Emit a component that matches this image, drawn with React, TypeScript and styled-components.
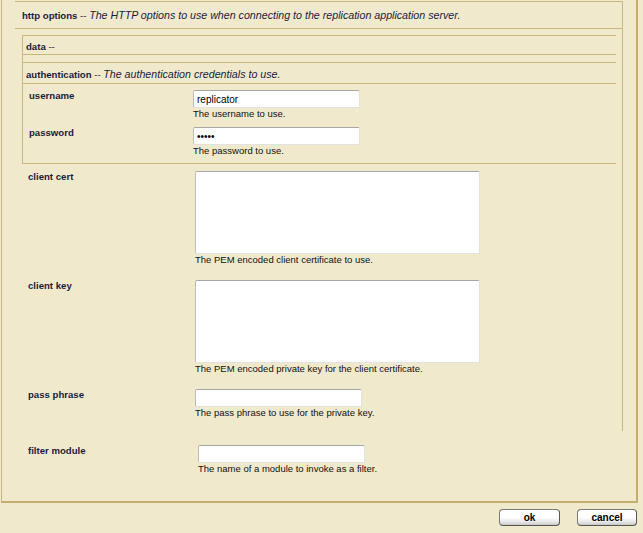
import React from 'react';
import styled, { createGlobalStyle } from 'styled-components';

const C = {
  bg: '#f1e9cc',
  line: '#c9b77c',
  frame: '#c4ae6e',
  ink: '#1b1b3e',
};

const Global = createGlobalStyle`
  html, body { margin: 0; padding: 0; background: ${C.bg}; }
  body {
    font-family: "Liberation Sans", Arial, sans-serif;
    width: 643px;
    height: 533px;
    overflow: hidden;
  }
  * { box-sizing: border-box; }
`;

const Page = styled.div`
  width: 643px;
  height: 533px;
  display: flex;
  flex-direction: column;
`;

const Frame = styled.div`
  margin-left: 1px;
  width: 637px;
  height: 503px;
  border-left: 1px solid ${C.line};
  border-right: 2px solid ${C.frame};
  border-bottom: 2px solid ${C.frame};
  padding: 1px 13px 0;
  display: flex;
  flex-direction: column;
`;

const Box = styled.div`
  border-top: 1px solid ${C.line};
  border-right: 1px solid ${C.line};
`;

const BoxHeader = styled.div`
  height: 27px;
  line-height: 24px;
  padding-left: 7px;
  border-bottom: 1px solid ${C.line};
  color: ${C.ink};
  white-space: nowrap;
`;

const Title = styled.span`
  font-weight: bold;
  font-size: 9.6px;
`;

const Dash = styled.span`
  font-size: 9.6px;
`;

const Note = styled.span`
  font-style: italic;
  font-size: 10.67px;
`;

const BoxBody = styled.div`
  padding: 6px 6px 12px 7px;
`;

const Group = styled.div`
  border-left: 1px solid ${C.line};
  border-top: 1px solid ${C.line};
`;

const SubHeader = styled.div<{ $h: number }>`
  height: ${(p) => p.$h + 1}px;
  line-height: ${(p) => p.$h}px;
  padding-left: 3px;
  border-bottom: 1px solid ${C.line};
  color: ${C.ink};
  white-space: nowrap;
`;

const SubSection = styled.div`
  margin-top: 7px;
  border-top: 1px solid ${C.line};
  border-bottom: 1px solid ${C.line};
`;

const Fields = styled.div<{ $pad: string; $gap: number }>`
  display: flex;
  flex-direction: column;
  gap: ${(p) => p.$gap}px;
  padding: ${(p) => p.$pad};
`;

const Row = styled.div<{ $label: number }>`
  display: grid;
  grid-template-columns: ${(p) => p.$label}px auto;
  align-items: start;
`;

const Label = styled.div`
  font-weight: bold;
  font-size: 9.6px;
  line-height: 12px;
  color: ${C.ink};
`;

const Control = styled.div`
  display: flex;
  flex-direction: column;
  align-items: flex-start;
`;

const fieldBorder = `
  border-top: 1px solid #a7a7a7;
  border-left: 1px solid #bdbdbd;
  border-right: 1px solid #e2e2e2;
  border-bottom: 1px solid #e2e2e2;
  border-radius: 2px;
  background: #fff;
  outline: none;
`;

const TextInput = styled.input`
  ${fieldBorder}
  display: block;
  width: 167px;
  height: 18px;
  margin: 0;
  padding: 0 3px;
  font-family: "Liberation Sans", Arial, sans-serif;
  font-size: 10px;
  color: #000;
`;

const TextArea = styled.textarea`
  ${fieldBorder}
  display: block;
  width: 285px;
  height: 83px;
  margin: 0;
  padding: 2px 3px;
  resize: none;
  font-family: "Liberation Sans", Arial, sans-serif;
  font-size: 10px;
`;

const Desc = styled.div`
  font-size: 9.5px;
  line-height: 12px;
  color: #111;
  white-space: nowrap;
`;

const Outside = styled.div`
  padding: 14px 0 0 13px;
`;

const ButtonBar = styled.div`
  display: flex;
  justify-content: flex-end;
  gap: 17px;
  padding: 6px 6px 0 0;
`;

const Button = styled.button<{ $w: number }>`
  width: ${(p) => p.$w}px;
  height: 17px;
  margin: 0;
  padding: 0;
  border: 1px solid #7a7a7a;
  border-bottom-color: #555;
  border-right-color: #555;
  border-radius: 4px;
  background: linear-gradient(#ffffff 0%, #ffffff 50%, #e6e6e6 80%, #c8c8c8 100%);
  font-family: "Liberation Sans", Arial, sans-serif;
  font-weight: bold;
  font-size: 10px;
  color: #000;
  cursor: pointer;
`;

type Field = {
  label: string;
  desc: string;
  kind: 'text' | 'password' | 'area';
  value?: string;
};

const authFields: Field[] = [
  { label: 'username', desc: 'The username to use.', kind: 'text', value: 'replicator' },
  { label: 'password', desc: 'The password to use.', kind: 'password', value: 'xxxxx' },
];

const httpFields: Field[] = [
  { label: 'client cert', desc: 'The PEM encoded client certificate to use.', kind: 'area' },
  { label: 'client key', desc: 'The PEM encoded private key for the client certificate.', kind: 'area' },
  { label: 'pass phrase', desc: 'The pass phrase to use for the private key.', kind: 'text' },
];

const filterFields: Field[] = [
  { label: 'filter module', desc: 'The name of a module to invoke as a filter.', kind: 'text' },
];

function FieldRow({ f, labelWidth }: { f: Field; labelWidth: number }) {
  return (
    <Row $label={labelWidth}>
      <Label>{f.label}</Label>
      <Control>
        {f.kind === 'area' ? (
          <TextArea defaultValue="" />
        ) : (
          <TextInput type={f.kind} defaultValue={f.value ?? ''} />
        )}
        <Desc>{f.desc}</Desc>
      </Control>
    </Row>
  );
}

export default function App() {
  return (
    <Page>
      <Global />
      <Frame>
        <Box>
          <BoxHeader>
            <Title>http options</Title>
            <Dash> -- </Dash>
            <Note>The HTTP options to use when connecting to the replication application server.</Note>
          </BoxHeader>
          <BoxBody>
            <Group>
              <SubHeader $h={18}>
                <Title>data</Title>
                <Dash> --</Dash>
              </SubHeader>
              <SubSection>
                <SubHeader $h={20}>
                  <Title>authentication</Title>
                  <Dash> -- </Dash>
                  <Note>The authentication credentials to use.</Note>
                </SubHeader>
                <Fields $pad="6px 0 6px 6px" $gap={7}>
                  {authFields.map((f) => (
                    <FieldRow key={f.label} f={f} labelWidth={164} />
                  ))}
                </Fields>
              </SubSection>
            </Group>
            <Fields $pad="7px 0 0 6px" $gap={14}>
              {httpFields.map((f) => (
                <FieldRow key={f.label} f={f} labelWidth={167} />
              ))}
            </Fields>
          </BoxBody>
        </Box>
        <Outside>
          {filterFields.map((f) => (
            <FieldRow key={f.label} f={f} labelWidth={170} />
          ))}
        </Outside>
      </Frame>
      <ButtonBar>
        <Button $w={61}>ok</Button>
        <Button $w={60}>cancel</Button>
      </ButtonBar>
    </Page>
  );
}
